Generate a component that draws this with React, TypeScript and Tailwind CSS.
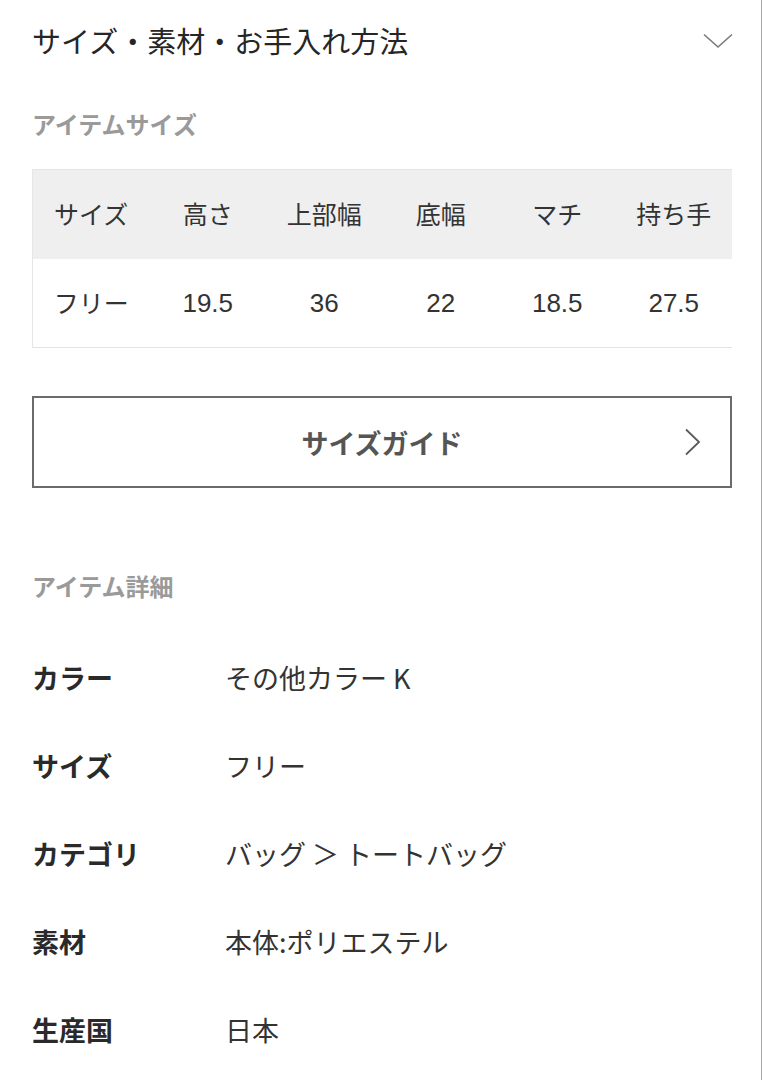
import React from "react";

const font = { fontFamily: '"Noto Sans CJK JP", "Liberation Sans", sans-serif' };

const headers = ["サイズ", "高さ", "上部幅", "底幅", "マチ", "持ち手"];
const values = ["フリー", "19.5", "36", "22", "18.5", "27.5"];

const details: [string, string][] = [
  ["カラー", "その他カラー K"],
  ["サイズ", "フリー"],
  ["カテゴリ", "バッグ ＞ トートバッグ"],
  ["素材", "本体:ポリエステル"],
  ["生産国", "日本"],
];

export default function App() {
  return (
    <div
      className="w-[762px] min-h-[1080px] bg-white border-r border-[#a8a8a8] pl-[32px]"
      style={font}
    >
      <div className="w-[700px]">
        <div className="h-[84px] flex items-center justify-between pb-[3px]">
          <span className="text-[29px] text-[#262626] leading-none">
            サイズ・素材・お手入れ方法
          </span>
          <svg width="30" height="16" viewBox="0 0 30 16" className="mr-[-1px] mt-[1px]">
            <path d="M1 1.5 L15 14 L29 1.5" fill="none" stroke="#7a7a7a" strokeWidth="1.6" />
          </svg>
        </div>
        <div className="h-[85px] flex items-center pb-[5px]">
          <span className="text-[24px] font-bold text-[#9a9a9a] leading-none">
            アイテムサイズ
          </span>
        </div>
        <div className="border-l border-t border-[#e6e6e6]">
          <div className="grid grid-cols-6 h-[89px] bg-[#efefef] items-center pb-[3px]">
            {headers.map((h) => (
              <div key={h} className="text-center text-[25px] text-[#333] leading-none">
                {h}
              </div>
            ))}
          </div>
          <div className="grid grid-cols-6 h-[89px] items-center border-b border-[#e3e3e3] pb-[1px]">
            {values.map((v, i) => (
              <div
                key={i}
                className={i === 0 ? "text-center text-[25px] text-[#333] leading-none" : "text-center text-[26px] text-[#333] leading-none"}
                style={i === 0 ? font : { fontFamily: '"Liberation Sans", "Noto Sans CJK JP", sans-serif' }}
              >
                {v}
              </div>
            ))}
          </div>
        </div>
        <div className="mt-[48px] h-[92px] border-2 border-[#6b6b6b] relative flex items-center justify-center">
          <span className="text-[27px] font-bold text-[#555] leading-none">サイズガイド</span>
          <svg
            width="18"
            height="28"
            viewBox="0 0 18 28"
            className="absolute right-[28px] top-1/2 -translate-y-1/2"
          >
            <path d="M2 1.5 L15 14 L2 26.5" fill="none" stroke="#5a5a5a" strokeWidth="1.8" />
          </svg>
        </div>
        <div className="mt-[82px] h-[34px] flex items-center pb-[3px]">
          <span className="text-[24px] font-bold text-[#9a9a9a] leading-none">アイテム詳細</span>
        </div>
        <div className="mt-[31px]">
          {details.map(([k, v]) => (
            <div key={k} className="h-[88px] flex items-center pb-[4px]">
              <div className="w-[193px] text-[27px] font-bold text-[#2a2a2a] leading-none">{k}</div>
              <div className="text-[27px] text-[#333] leading-none">{v}</div>
            </div>
          ))}
        </div>
      </div>
    </div>
  );
}
